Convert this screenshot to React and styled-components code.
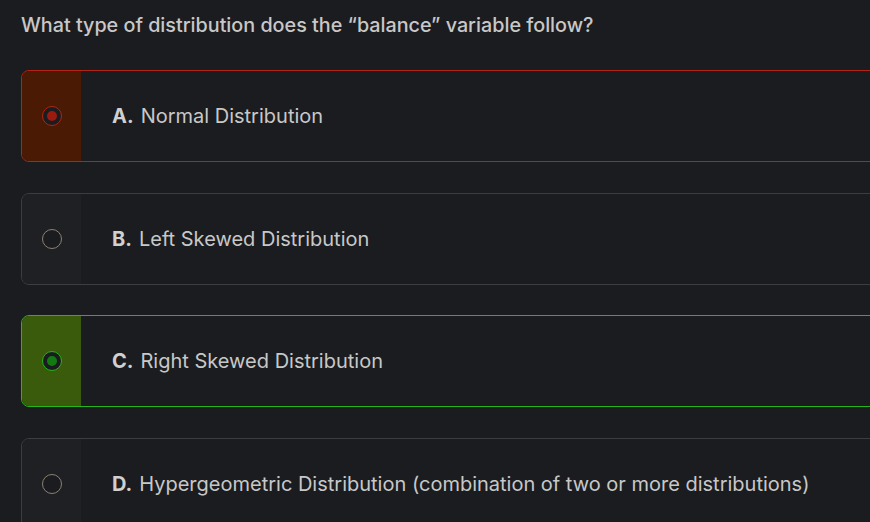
import React from 'react'
import styled, { createGlobalStyle } from 'styled-components'

const Global = createGlobalStyle`
  html, body {
    margin: 0;
    padding: 0;
    background: #1b1c1f;
    overflow: hidden;
  }
`;

const Page = styled.div`
  width: 900px;
  padding: 12px 0 0 21px;
  font-family: Inter, "Noto Sans", sans-serif;
  color: #cfcfcf;
`;

const Question = styled.h2`
  margin: 0 0 31px;
  font-size: 19.75px;
  line-height: 27px;
  font-weight: 500;
  color: #c8c8c8;
`;

const Options = styled.div`
  display: flex;
  flex-direction: column;
  gap: 30.5px;
`;

const tones = {
  wrong: { border: '#b32414', panel: '#4a1a04', ring: '#b32414', dot: '#9c1b10' },
  right: { border: '#25b51c', panel: '#3a5a0c', ring: '#25b51c', dot: '#137a12' },
  idle: { border: '#3c3d40', panel: '#1f2023', ring: '#8a8372', dot: null },
};

const Card = styled.div`
  display: flex;
  height: 90px;
  border: 1px solid ${p => tones[p.$tone].border};
  border-radius: 8px;
  overflow: hidden;
`;

const Side = styled.div`
  width: 59px;
  flex-shrink: 0;
  display: flex;
  align-items: center;
  justify-content: center;
  background: ${p => tones[p.$tone].panel};
`;

const Radio = styled.span`
  box-sizing: border-box;
  width: 20px;
  height: 20px;
  border-radius: 50%;
  border: 1.5px solid ${p => tones[p.$tone].ring};
  background: #1b1c1f;
  display: flex;
  align-items: center;
  justify-content: center;

  &::after {
    content: '';
    display: ${p => (tones[p.$tone].dot ? 'block' : 'none')};
    width: 10px;
    height: 10px;
    border-radius: 50%;
    background: ${p => tones[p.$tone].dot};
  }
`;

const Label = styled.div`
  display: flex;
  align-items: center;
  padding-left: 31px;
  font-size: 20px;
  color: #c8c8c8;
  white-space: nowrap;
`;

const Letter = styled.b`
  font-weight: 700;
  margin-right: 7px;
  color: #d0d0d0;
`;

const options = [
  { letter: 'A.', text: 'Normal Distribution', tone: 'wrong' },
  { letter: 'B.', text: 'Left Skewed Distribution', tone: 'idle' },
  { letter: 'C.', text: 'Right Skewed Distribution', tone: 'right' },
  { letter: 'D.', text: 'Hypergeometric Distribution (combination of two or more distributions)', tone: 'idle' },
];

export default function App() {
  return (
    <Page>
      <Global />
      <Question>What type of distribution does the “balance” variable follow?</Question>
      <Options>
        {options.map(o => (
          <Card key={o.letter} $tone={o.tone}>
            <Side $tone={o.tone}>
              <Radio $tone={o.tone} />
            </Side>
            <Label>
              <Letter>{o.letter}</Letter>
              {o.text}
            </Label>
          </Card>
        ))}
      </Options>
    </Page>
  )
}
